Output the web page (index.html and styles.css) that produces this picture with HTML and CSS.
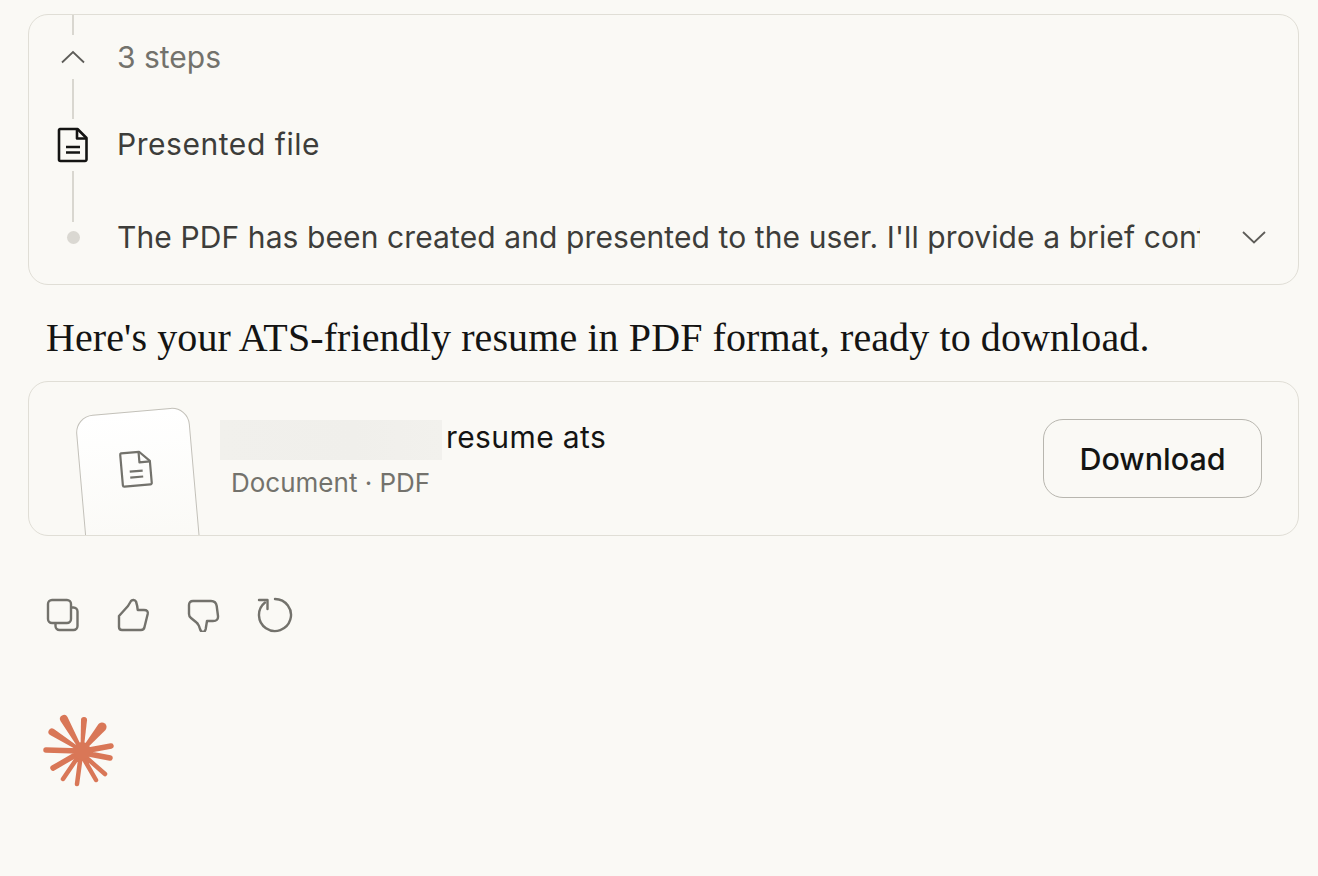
FILE: index.html
```html
<!DOCTYPE html>
<html lang="en">
<head>
<meta charset="utf-8">
<title>Resume</title>
<link rel="stylesheet" href="styles.css">
</head>
<body>
<main class="page">
  <section class="card steps">
    <div class="line line-a"></div>
    <div class="row row-a">
      <span class="rail"><svg class="chev" width="26" height="14" viewBox="0 0 26 14"><path d="M2 12.500 13 2l11 10.500"/></svg></span>
      <span class="label muted">3 steps</span>
    </div>
    <div class="line line-b"></div>
    <div class="row row-b">
      <span class="rail"><svg class="fileicon" width="32" height="36" viewBox="0 0 32 36"><path d="M3 2h17.500L29.500 11v21.500a1.500 1.500 0 0 1-1.500 1.500H3.500A1.500 1.500 0 0 1 2 32.500V3.500A1.500 1.500 0 0 1 3.500 2z"/><path d="M20 2v9.500h9.500M9 20h14M9 25.500h14"/></svg></span>
      <span class="label wide">Presented file</span>
    </div>
    <div class="line line-c"></div>
    <div class="row row-c">
      <span class="rail"><span class="dot"></span></span>
      <span class="label clip">The PDF has been created and presented to the user. I'll provide a brief confirmation message.</span>
      <svg class="chev down" width="26" height="14" viewBox="0 0 26 14"><path d="M2 2l11 10.500L24 2"/></svg>
    </div>
  </section>

  <p class="message">Here's your ATS-friendly resume in PDF format, ready to download.</p>

  <section class="card file">
    <div class="thumb">
      <svg class="thumbicon" width="34" height="38" viewBox="0 0 34 38"><path d="M3 2h18L31 12v22a1.500 1.500 0 0 1-1.500 1.500h-26A1.500 1.500 0 0 1 2 34V3.500A1.500 1.500 0 0 1 3 2z"/><path d="M20.500 2v10.500H31M10 21h13M10 27h13"/></svg>
    </div>
    <div class="meta">
      <div class="name"><span class="redact"></span><span class="nametext">resume ats</span></div>
      <div class="type">Document · PDF</div>
    </div>
    <button class="download">Download</button>
  </section>

  <div class="actions">
    <span class="act"><svg width="34" height="34" viewBox="0 0 34 34"><rect x="2" y="2" width="23" height="23" rx="4"/><path d="M26 9.500h1.500a4 4 0 0 1 4 4V28a4 4 0 0 1-4 4H13.500a4 4 0 0 1-4-4v-2"/></svg></span>
    <span class="act"><svg width="34" height="34" viewBox="0 0 34 34"><path d="M3 18 12 8 15 3C16 1.500 19 1.500 20 3.500 20.500 5 21.500 8 21.700 12H28Q32.500 12 31.700 16L28.500 29Q28 32 25 32H6Q3 32 3 29Z"/></svg></span>
    <span class="act"><svg width="34" height="34" viewBox="0 0 34 34"><path d="M7 3H25Q30 3 30.700 8L32 18Q32.500 23 27 23H21L19.700 31Q19 34 17 34Q15 34 14 31Q12.500 26 10.500 24.500L5 20Q3 18.500 3 16V7Q3 3 7 3Z"/></svg></span>
    <span class="act retry"><svg width="36" height="36" viewBox="0 0 36 36"><path d="M18 2A16 16 0 1 1 8 5.500"/><path d="M2 3h8.500v9"/></svg></span>
  </div>

  <svg class="spark" width="90" height="90" viewBox="0 0 90 90">
    <path class="ray" d="M49.300 44.300 33.500 11A4 4 0 0 0 26.500 15L46.700 45.700Z"/>
    <path class="ray" d="M46.800 44 64.500 18.100A4.500 4.500 0 0 1 71.500 23.900L49.200 46Z"/>
    <path class="ray" d="M46.500 45 47 13.800A3 3 0 0 1 53 14.200L49.500 45Z"/>
    <path class="ray" d="M48.800 43.700 19.900 23A3.500 3.500 0 0 0 16.100 29L47.200 46.300Z"/>
    <g class="mid"><path d="M45 45 12 44M45 47 19 62M77 40 50 45M76 52 50 47"/></g>
    <g class="thin"><path d="M71 68 47 47M62 74 47 48M43 78 47 48M29 73 46 48"/></g>
    <circle cx="48" cy="45" r="9"/>
  </svg>
</main>
</body>
</html>
```
FILE: styles.css
```css
* { box-sizing: border-box; }
html, body { margin: 0; height: 100%; }
body {
  background: #faf9f5;
  color: #141413;
  font-family: Inter, "Liberation Sans", sans-serif;
  overflow: hidden;
}
.page { padding: 14px 19px 0 28px; }
.card {
  background: #faf9f5;
  border: 1px solid #e0ded6;
  border-radius: 20px;
  overflow: hidden;
}
.steps { height: 271px; padding: 0 17px; }
.line { width: 1.500px; background: #d9d7d0; margin-left: 26px; }
.line-a { height: 20px; }
.line-b { height: 40px; }
.line-c { height: 51px; }
.row { display: flex; align-items: center; gap: 17px; }
.row-a { height: 44px; }
.row-b { height: 52px; }
.row-c { height: 30px; padding-right: 16px; }
.rail { width: 54px; flex: none; display: flex; align-items: center; justify-content: center; }
.label { font-size: 30px; color: #3d3d3a; white-space: nowrap; }
.wide { letter-spacing: 0.55px; position: relative; top: -1px; }
.muted { color: #73726c; }
.clip { width: 1083px; overflow: hidden; flex: none; letter-spacing: 0.1px; }
.chev { fill: none; stroke: #5e5d59; stroke-width: 1.800; }
.down { margin-left: 24px; flex: none; }
.fileicon { fill: none; stroke: #141413; stroke-width: 2.600; stroke-linejoin: round; }
.dot { width: 13px; height: 13px; border-radius: 50%; background: #dad8d2; }
.message {
  font-family: "Liberation Serif", serif;
  font-size: 40px;
  letter-spacing: 0.1px;
  line-height: 48px;
  margin: 29px 0 19px 18px;
  color: #141413;
  white-space: nowrap;
}
.file { height: 155px; display: flex; align-items: flex-start; }
.thumb {
  width: 114px;
  height: 150px;
  margin: 29px 0 0 52px;
  flex: none;
  transform: rotate(-5deg);
  background: linear-gradient(#ffffff, #faf9f5);
  border: 1px solid #c3c1ba;
  border-radius: 18px;
  display: flex;
  justify-content: center;
  padding-top: 38px;
}
.thumbicon { fill: none; stroke: #73726c; stroke-width: 2.200; stroke-linejoin: round; }
.meta { margin: 38px 0 0 25px; }
.name { display: flex; align-items: center; gap: 4px; font-size: 30px; height: 40px; color: #141413; }
.nametext { letter-spacing: 0.4px; position: relative; top: -3px; }
.redact { width: 222px; height: 40px; background: linear-gradient(90deg, #f1f0ec, #f0efeb 60%, #f2f1ed); }
.type { font-size: 26px; color: #73726c; margin: 7px 0 0 11px; line-height: 32px; }
.download {
  margin: 37px 36px 0 auto;
  width: 219px;
  height: 79px;
  background: transparent;
  border: 1px solid #b8b6af;
  border-radius: 20px;
  font: 500 30.500px Inter, "Liberation Sans", sans-serif;
  color: #141413;
}
.actions { display: flex; margin-top: 61px; }
.act { width: 70px; height: 36px; display: flex; align-items: center; justify-content: center; }
.retry { padding-left: 3px; }
.act svg { fill: none; stroke: #73726c; stroke-width: 2.400; stroke-linejoin: round; stroke-linecap: round; }
.spark { display: block; margin: 73px 0 0 6px; }
.spark .ray { fill: #d97757; }
.spark g path { fill: none; stroke: #d97757; stroke-linecap: round; }
.spark circle { fill: #d97757; }
.spark .mid path { stroke-width: 5.500px; }
.spark .thin path { stroke-width: 4.500px; }
```
